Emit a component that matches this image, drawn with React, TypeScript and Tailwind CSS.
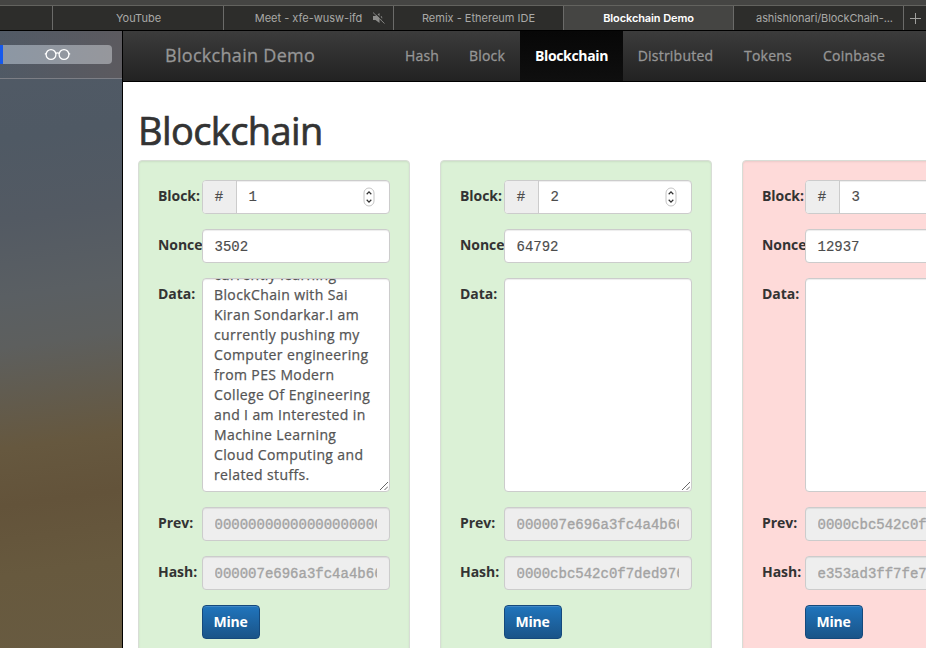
import type { ReactNode } from 'react';

type BlockData = {
  number: string;
  nonce: string;
  data: string[];
  prev: string;
  hash: string;
  valid: boolean;
};

const blocks: BlockData[] = [
  {
    number: '1',
    nonce: '3502',
    data: [
      'currently learning',
      'BlockChain with Sai',
      'Kiran Sondarkar.I am',
      'currently pushing my',
      'Computer engineering',
      'from PES Modern',
      'College Of Engineering',
      'and I am Interested in',
      'Machine Learning',
      'Cloud Computing and',
      'related stuffs.',
    ],
    prev: '00000000000000000000',
    hash: '000007e696a3fc4a4b66',
    valid: true,
  },
  {
    number: '2',
    nonce: '64792',
    data: [],
    prev: '000007e696a3fc4a4b66',
    hash: '0000cbc542c0f7ded976',
    valid: true,
  },
  {
    number: '3',
    nonce: '12937',
    data: [],
    prev: '0000cbc542c0f7ded976',
    hash: 'e353ad3ff7fe7',
    valid: false,
  },
];

const tabText = "font-['Inter','Liberation_Sans',sans-serif] text-[11px] leading-[24px]";

function Tab({ className, children }: { className: string; children?: ReactNode }) {
  return (
    <div
      className={`flex h-6 shrink-0 items-center justify-center border-r border-[#6b6b69] whitespace-nowrap ${tabText} ${className}`}
    >
      {children}
    </div>
  );
}

function MutedIcon() {
  return (
    <svg className="h-3 w-3.5" viewBox="0 0 14 12">
      <path d="M1 4h2.500L7.500 1v10L3.500 8H1z" fill="#8d8d8b" />
      <path d="M9.200 4.200q1.300 1.800 0 3.600" fill="none" stroke="#8d8d8b" />
      <path d="M2 0l11.500 10.500" stroke="#2d2d2b" strokeWidth="1.400" />
      <path d="M1 0.500l11.500 11" stroke="#8d8d8b" strokeWidth="0.900" />
    </svg>
  );
}

function TabBar() {
  return (
    <div className="h-[31px] border-b border-black bg-[#2d2d2b]">
      <div className="h-[6px] border-b border-[#63635f] bg-[#454543]" />
      <div className="flex text-[#a9a9a7]">
        <Tab className="w-[53px]" />
        <Tab className="w-[171px] pl-px">YouTube</Tab>
        <Tab className="w-[170px] gap-2.5 pl-6">
          <span>Meet - xfe-wusw-ifd</span>
          <MutedIcon />
        </Tab>
        <Tab className="w-[170px]">Remix - Ethereum IDE</Tab>
        <Tab className="w-[170px] bg-[#454543] font-semibold tracking-[-0.1px] text-white">Blockchain Demo</Tab>
        <Tab className="w-[170px] pl-3 tracking-[-0.1px]">ashishlonari/BlockChain-...</Tab>
        <div className="flex h-6 w-[22px] items-center justify-center">
          <svg className="size-[11px]" viewBox="0 0 11 11">
            <path d="M5.500 0v11M0 5.500h11" stroke="#a0a09e" />
          </svg>
        </div>
      </div>
    </div>
  );
}

function Sidebar() {
  return (
    <aside className="w-[123px] shrink-0 border-r border-black bg-[linear-gradient(172deg,#515a66_0%,#4f5964_17%,#535a63_30%,#5a5f63_42%,#5d5f5e_50%,#66583f_66%,#63533a_75%,#67593e_86%,#685b41_100%)]">
      <div className="h-12 border-b border-[#7c7e85] bg-linear-to-r from-transparent to-[#5c5a5f] pt-3.5">
        <div className="flex h-[19px] w-[112px] items-center justify-center rounded-r border-l-3 border-[#1659ec] bg-linear-to-r from-[#8c97a4] to-[#96979c]">
          <svg className="h-[13px] w-[27px]" viewBox="0 0 27 13" fill="none" stroke="white" strokeWidth="1.300">
            <circle cx="7" cy="6.500" r="4.900" />
            <circle cx="20" cy="6.500" r="4.900" />
            <path d="M11.500 5.500q2-1.200 4 0M2.200 5.800H.8M24.800 5.800h1.400" />
          </svg>
        </div>
      </div>
    </aside>
  );
}

const sturdy = '[-webkit-text-stroke:0.3px_currentColor]';

function Nav() {
  const link = `flex h-[50px] items-center justify-center pb-[2px] text-[14px] tracking-[0.22px] text-[#969696] ${sturdy}`;
  return (
    <nav className="flex h-[51px] border-b border-black bg-linear-to-b from-[#3c3c3c] to-[#222]">
      <div
        className={`flex h-[50px] w-[267px] items-center pb-[2px] pl-[42px] text-[18px] tracking-[0.3px] whitespace-nowrap text-[#969696] ${sturdy}`}
      >
        Blockchain Demo
      </div>
      <a className={`${link} w-[64px]`}>Hash</a>
      <a className={`${link} w-[66px]`}>Block</a>
      <a className="flex h-[50px] w-[103px] items-center justify-center bg-linear-to-b from-[#070707] to-[#0f0f0f] pb-[2px] text-[14px] font-bold tracking-[-0.35px] text-white">
        Blockchain
      </a>
      <a className={`${link} w-[105px]`}>Distributed</a>
      <a className={`${link} w-[80px]`}>Tokens</a>
      <a className={`${link} w-[92px]`}>Coinbase</a>
    </nav>
  );
}

const field = 'rounded border border-[#ccc] shadow-[inset_0_1px_1px_rgba(0,0,0,0.075)]';
const mono = "font-['Liberation_Mono',monospace] text-[14px] text-[#4c4c4c] [-webkit-text-stroke:0.15px_currentColor]";

function Row({ label, narrow, children }: { label: string; narrow: boolean; children: ReactNode }) {
  return (
    <div className="flex">
      <div
        className={`shrink-0 overflow-visible pt-[6px] text-[14px] leading-5 font-bold tracking-[-0.05px] whitespace-nowrap text-[#333] ${narrow ? 'w-[43px]' : 'w-11'}`}
      >
        {label}
      </div>
      <div className="relative w-[188px] shrink-0">{children}</div>
    </div>
  );
}

function Spinner() {
  return (
    <svg className="mr-3.5 h-5 w-3" viewBox="0 0 12 20" fill="none">
      <rect x="1" y="1" width="10" height="18" rx="5" fill="white" stroke="#c4c4c4" />
      <path d="M3.700 7.200L6 4.900l2.300 2.300M3.700 12.800L6 15.100l2.300-2.300" stroke="#333" strokeWidth="1.250" />
    </svg>
  );
}

function ReadOnly({ value }: { value: string }) {
  return (
    <div className={`${field} h-[34px] bg-[#eee] pr-3 pl-[11.500px]`}>
      <div className="h-8 overflow-hidden font-['Liberation_Mono',monospace] text-[14px] leading-[35px] whitespace-nowrap text-[#a3a3a3] [-webkit-text-stroke:0.35px_currentColor]">
        {value}
      </div>
    </div>
  );
}

function BlockCard({ block }: { block: BlockData }) {
  const narrow = !block.valid;
  return (
    <section
      className={`flex h-[540px] w-[272px] shrink-0 flex-col gap-[15px] rounded border border-[#d8ddd6] p-[19px] shadow-[inset_0_1px_2px_rgba(0,0,0,0.08)] ${block.valid ? 'bg-[#dbf1d6]' : 'bg-[#fedad9]'}`}
    >
      <Row label="Block:" narrow={narrow}>
        <div className={`${field} flex h-[34px] items-center overflow-hidden bg-white ${mono}`}>
          <span className="flex h-8 w-[34px] shrink-0 items-center justify-center border-r border-[#ccc] bg-[#eee] pt-px pr-px">
            #
          </span>
          <span className="flex-1 pt-px pl-[11.500px]">{block.number}</span>
          <Spinner />
        </div>
      </Row>
      <Row label="Nonce" narrow={narrow}>
        <div className={`${field} ${mono} h-[34px] bg-white px-[11.500px] leading-[35px]`}>{block.nonce}</div>
      </Row>
      <Row label="Data:" narrow={narrow}>
        <div
          className={`${field} flex h-[214px] flex-col justify-end overflow-hidden bg-white px-[11px] pb-[6px] text-[14px] leading-5 tracking-[0.38px] whitespace-nowrap text-[#555] [-webkit-text-stroke:0.25px_currentColor]`}
        >
          {block.data.map((line) => (
            <div key={line} className="shrink-0">
              {line}
            </div>
          ))}
        </div>
        <svg className="absolute right-0.5 bottom-0.5 size-2" viewBox="0 0 8 8" stroke="#555" strokeWidth="0.900">
          <path d="M0 8L8 0M4.500 8L8 4.500" />
        </svg>
      </Row>
      <Row label="Prev:" narrow={narrow}>
        <ReadOnly value={block.prev} />
      </Row>
      <Row label="Hash:" narrow={narrow}>
        <ReadOnly value={block.hash} />
      </Row>
      <Row label="" narrow={narrow}>
        <button className="h-[34px] w-[58px] rounded border border-[#15497c] bg-linear-to-b from-[#2075bd] to-[#1a5488] pr-px text-[14px] leading-5 font-bold tracking-[-0.2px] text-white shadow-[inset_0_1px_0_rgba(255,255,255,0.15)]">
          Mine
        </button>
      </Row>
    </section>
  );
}

export default function App() {
  return (
    <div className="flex h-[648px] w-[926px] flex-col overflow-hidden bg-white font-['Open_Sans','Noto_Sans',sans-serif]">
      <TabBar />
      <div className="flex min-h-0 flex-1">
        <Sidebar />
        <main className="min-w-0 flex-1 overflow-hidden">
          <Nav />
          <div className="pl-[15px]">
            <h1 className="h-[78px] pt-[27px] text-[38px] leading-[42px] tracking-[-0.6px] text-[#333] [-webkit-text-stroke:0.7px_currentColor]">
              Blockchain
            </h1>
            <div className="flex gap-[30px]">
              {blocks.map((block) => (
                <BlockCard key={block.number} block={block} />
              ))}
            </div>
          </div>
        </main>
      </div>
    </div>
  );
}
